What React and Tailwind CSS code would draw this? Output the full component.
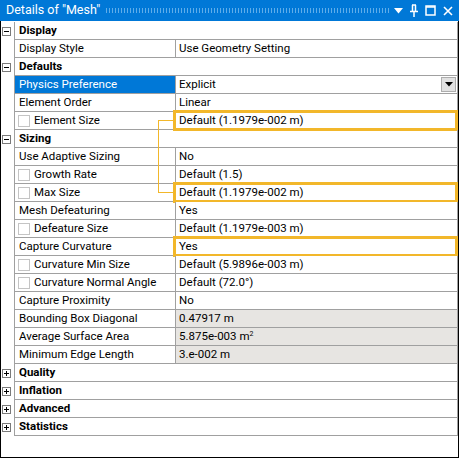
import React from 'react'

const rows = [
  { group: true, label: 'Display', open: true },
  { label: 'Display Style', value: 'Use Geometry Setting' },
  { group: true, label: 'Defaults', open: true },
  { label: 'Physics Preference', value: 'Explicit', selected: true, dropdown: true },
  { label: 'Element Order', value: 'Linear' },
  { label: 'Element Size', value: 'Default (1.1979e-002 m)', check: true, mark: true, red: true },
  { group: true, label: 'Sizing', open: true },
  { label: 'Use Adaptive Sizing', value: 'No' },
  { label: 'Growth Rate', value: 'Default (1.5)', check: true },
  { label: 'Max Size', value: 'Default (1.1979e-002 m)', check: true, mark: true },
  { label: 'Mesh Defeaturing', value: 'Yes' },
  { label: 'Defeature Size', value: 'Default (1.1979e-003 m)', check: true },
  { label: 'Capture Curvature', value: 'Yes', mark: true },
  { label: 'Curvature Min Size', value: 'Default (5.9896e-003 m)', check: true },
  { label: 'Curvature Normal Angle', value: 'Default (72.0°)', check: true },
  { label: 'Capture Proximity', value: 'No' },
  { label: 'Bounding Box Diagonal', value: '0.47917 m', readonly: true },
  { label: 'Average Surface Area', value: 'area', readonly: true },
  { label: 'Minimum Edge Length', value: '3.e-002 m', readonly: true },
  { group: true, label: 'Quality' },
  { group: true, label: 'Inflation' },
  { group: true, label: 'Advanced' },
  { group: true, label: 'Statistics' },
]

function Expander({ open }) {
  return (
    <div className="ml-[1px] flex h-[9px] w-[9px] items-center justify-center border border-[#7a7a7a] bg-white">
      <svg width="7" height="7" viewBox="0 0 7 7">
        <path d="M1 3.5h5" stroke="#000" strokeWidth="1" />
        {!open && <path d="M3.5 1v5" stroke="#000" strokeWidth="1" />}
      </svg>
    </div>
  )
}

function Row({ row }) {
  return (
    <div className="flex h-[18px]">
      <div className="flex w-[13px] items-center">
        {row.group && <Expander open={row.open} />}
      </div>
      <div
        className={`relative flex flex-1 border-b border-l border-r border-[#a0a0a0] ${
          row.red ? 'border-r-[#e01010]' : ''
        }`}
      >
        {row.group ? (
          <div className="flex items-center pl-[4px] font-bold">{row.label}</div>
        ) : (
          <>
            <div
              className={`flex w-[161px] shrink-0 items-center border-r border-[#a0a0a0] ${
                row.selected ? 'bg-[#0078d7] text-white' : ''
              } ${row.check ? 'pl-[3px]' : 'pl-[4px]'}`}
            >
              {row.check && <div className="mr-[4px] h-[12px] w-[12px] border border-[#c4c4c4] bg-white" />}
              <span className="whitespace-nowrap">{row.label}</span>
            </div>
            <div
              className={`relative flex flex-1 items-center pl-[3px] ${
                row.readonly ? 'bg-[#e7e5e2]' : 'bg-white'
              }`}
            >
              <span className="whitespace-nowrap">
                {row.value === 'area' ? (
                  <>
                    5.875e-003 m<sup className="text-[7px]">2</sup>
                  </>
                ) : (
                  row.value
                )}
              </span>
              {row.dropdown && (
                <div className="absolute right-[1px] top-[1px] flex h-[15px] w-[15px] items-center justify-center border border-[#adadad] bg-[#e1e1e1]">
                  <svg width="8" height="5" viewBox="0 0 8 5">
                    <path d="M0 0h8L4 4.5z" fill="#000" />
                  </svg>
                </div>
              )}
              {row.mark && (
                <div className="pointer-events-none absolute -bottom-[2px] -left-[3px] -right-[1px] -top-[2px] border-[3px] border-[#f2b72a]" />
              )}
            </div>
          </>
        )}
      </div>
    </div>
  )
}

export default function App() {
  return (
    <div
      className="flex h-[458px] w-[459px] flex-col overflow-hidden bg-white text-[11.5px] leading-none text-black"
      style={{ fontFamily: 'Roboto, "Noto Sans", sans-serif' }}
    >
      <div className="flex h-[21px] shrink-0 items-center bg-[#0078d7] pl-[6px] pr-[6px] text-white">
        <span className="whitespace-nowrap text-[12.5px]">Details of "Mesh"</span>
        <div className="ml-[5px] mr-[4px] h-[5px] flex-1 bg-[radial-gradient(circle,#5fadea_0.7px,transparent_0.9px)] bg-[length:3px_2px]" />
        <div className="flex items-center gap-[7px]">
          <svg width="9" height="6" viewBox="0 0 9 6">
            <path d="M0 0h9L4.5 5.5z" fill="#fff" />
          </svg>
          <svg width="8" height="13" viewBox="0 0 8 13">
            <path d="M2 1h4M2.5 1v6M5.5 1v6M0 7.5h8M4 8v5" stroke="#fff" strokeWidth="1.5" fill="none" />
          </svg>
          <svg width="11" height="11" viewBox="0 0 11 11">
            <rect x="1" y="1" width="9" height="9" stroke="#fff" strokeWidth="1.5" fill="none" />
            <path d="M1 2h9" stroke="#fff" strokeWidth="1.5" />
          </svg>
          <svg width="10" height="10" viewBox="0 0 10 10">
            <path d="M1 1l8 8M9 1l-8 8" stroke="#fff" strokeWidth="1.6" />
          </svg>
        </div>
      </div>
      <div className="relative flex-1 border-b border-l border-r border-black pt-px">
        {rows.map((row) => (
          <Row key={row.label} row={row} />
        ))}
        <div className="pointer-events-none absolute left-[157px] top-[99px] h-[73px] w-[15px] border-b border-l border-t border-[#f2b72a]" />
      </div>
    </div>
  )
}
